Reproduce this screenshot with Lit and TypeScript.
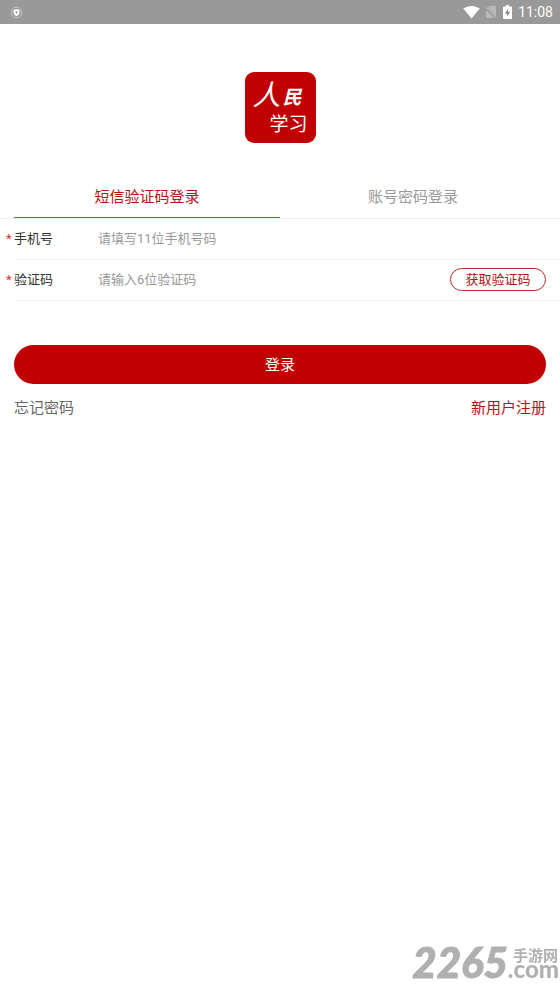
import { LitElement, html, css } from "lit";
import { customElement, state } from "lit/decorators.js";

@customElement("status-bar")
class StatusBar extends LitElement {
  static styles = css`
    :host {
      display: flex;
      align-items: center;
      justify-content: space-between;
      height: 24px;
      padding: 0 7px 0 10px;
      background: #999;
      color: #fff;
      font: 14px/24px Roboto, sans-serif;
    }
    svg { display: block; }
    .right { display: flex; align-items: center; }
    .wifi { margin-right: 5px; }
    .sim { margin-right: 6px; }
    .battery { margin-right: 6px; }
  `;
  render() {
    return html`
      <svg width="13" height="13" viewBox="0 0 13 13">
        <circle cx="6.5" cy="6.5" r="5.3" fill="none" stroke="#ccc" stroke-width="0.9" />
        <path d="M6.5 3 9.500 4v2.500c0 1.700-1.300 2.800-3 3.600C4.800 9.300 3.500 8.200 3.500 6.500V4z" fill="#fff" />
        <circle cx="6.500" cy="5.900" r="1" fill="#999" /><path d="M6.100 6h.8v2h-.8z" fill="#999" />
      </svg>
      <div class="right">
        <svg class="wifi" width="17" height="14" viewBox="0 0 17 14">
          <path d="M.3 3.600C5 .1 12 .1 16.700 3.600L8.500 13.600z" fill="#fff" />
        </svg>
        <svg class="sim" width="12" height="14" viewBox="0 0 12 14">
          <path d="M4.500 1H10a1 1 0 0 1 1 1v9.500L3 3zM1 4.800 9.300 13H2a1 1 0 0 1-1-1z" fill="#b8b8b8" />
          <path d="M.5 1.500 11.500 13" stroke="#c0c0c0" />
        </svg>
        <svg class="battery" width="9" height="14" viewBox="0 0 9 14">
          <path d="M3 0h3v1.500h2.200q.8 0 .8.800v10.900q0 .8-.8.800H.8q-.8 0-.8-.8V2.300q0-.8.8-.8H3z" fill="#fff" />
          <path d="M5.300 3.500 1.900 8.400h2.200v3.400l3-4.900H5z" fill="#888" />
        </svg>
        <span>11:08</span>
      </div>
    `;
  }
}

@customElement("app-root")
class AppRoot extends LitElement {
  @state() private tab = 0;

  static styles = css`
    :host {
      display: block;
      min-height: 100vh;
      background: #fff;
      color: #333;
      font-family: Roboto, "Noto Sans CJK SC", sans-serif;
      font-size: 13px;
    }
    * { box-sizing: border-box; }
    button, input { font: inherit; padding: 0; border: 0; background: none; }
    button { cursor: pointer; }
    .logo {
      display: flex;
      flex-direction: column;
      width: 71px;
      height: 71px;
      margin: 48px auto 32px;
      padding: 8px;
      border-radius: 9px;
      background: #c00000;
      color: #fff;
    }
    .brush {
      display: flex;
      align-items: flex-end;
      gap: 2px;
      font-style: italic;
      font-weight: 400;
      font-size: 28px;
      line-height: 32px;
    }
    .brush .small { font-size: 19px; font-weight: 700; line-height: 28px; }
    .study {
      align-self: flex-end;
      font-size: 19px;
      line-height: 25px;
    }
    .tabs {
      display: flex;
      padding: 0 14px;
      border-bottom: 1px solid #f5ecec;
    }
    .tab {
      flex: 1;
      height: 43px;
      padding-bottom: 2px;
      border-bottom: 1px solid transparent;
      font-size: 15px;
      color: #999;
    }
    .tab.active { color: #b80f12; border-bottom: 1px solid #c83c40; }
    .row {
      display: flex;
      align-items: center;
      height: 41px;
      margin-left: 14px;
      padding: 0 14px 2px 0;
      border-bottom: 1px solid #f5f5f5;
    }
    .star { width: 14px; margin-left: -14px; padding-left: 6px; color: #d9363a; }
    .name { width: 84px; padding-bottom: 2px; }
    .field { flex: 1; min-width: 0; height: 32px; color: #333; outline: none; }
    .field::placeholder { color: #999; opacity: 1; }
    .code {
      width: 96px;
      height: 23px;
      padding-bottom: 2px;
      border: 1px solid #b8282c;
      border-radius: 12px;
      color: #b01216;
    }
    .actions { padding: 44px 14px 0; }
    .login {
      display: block;
      width: 100%;
      height: 39px;
      padding-bottom: 2px;
      border-radius: 20px;
      background: #c00000;
      color: #fff;
      font-size: 15px;
    }
    .links {
      display: flex;
      justify-content: space-between;
      padding-top: 12px;
      font-size: 15px;
      line-height: 24px;
    }
    .links a { color: #666; text-decoration: none; }
    .links .register { color: #b80f12; }
    .mark {
      position: fixed;
      right: 1px;
      bottom: 12px;
      display: flex;
      align-items: flex-end;
      color: #b0b0b0;
      font-family: Lato, "Noto Sans CJK SC", sans-serif;
      font-weight: 900;
    }
    .digits { font-size: 42px; line-height: 42px; font-style: italic; -webkit-text-stroke: 1px #b0b0b0; }
    .side { display: flex; flex-direction: column; align-items: flex-end; padding-bottom: 8px; }
    .site { padding-right: 1px; font-size: 15px; line-height: 16px; font-weight: 700; }
    .com { font-size: 24px; line-height: 12px; }
  `;

  render() {
    return html`
      <status-bar></status-bar>
      <div class="logo">
        <div class="brush"><span>人</span><span class="small">民</span></div>
        <div class="study">学习</div>
      </div>
      <div class="tabs" role="tablist">
        ${["短信验证码登录", "账号密码登录"].map(
          (label, i) => html`<button
            class="tab ${this.tab === i ? "active" : ""}"
            role="tab"
            aria-selected=${this.tab === i}
            @click=${() => (this.tab = i)}
          >${label}</button>`
        )}
      </div>
      <form @submit=${(e: Event) => e.preventDefault()}>
        <div class="row">
          <span class="star">*</span>
          <label class="name" for="phone">手机号</label>
          <input class="field" id="phone" type="tel" placeholder="请填写11位手机号码" />
        </div>
        <div class="row">
          <span class="star">*</span>
          <label class="name" for="code">验证码</label>
          <input class="field" id="code" type="text" placeholder="请输入6位验证码" />
          <button class="code" type="button">获取验证码</button>
        </div>
        <div class="actions">
          <button class="login" type="submit">登录</button>
          <div class="links">
            <a href="#forgot">忘记密码</a>
            <a class="register" href="#register">新用户注册</a>
          </div>
        </div>
      </form>
      <div class="mark">
        <span class="digits">2265</span>
        <span class="side">
          <span class="site">手游网</span>
          <span class="com">.com</span>
        </span>
      </div>
    `;
  }
}
